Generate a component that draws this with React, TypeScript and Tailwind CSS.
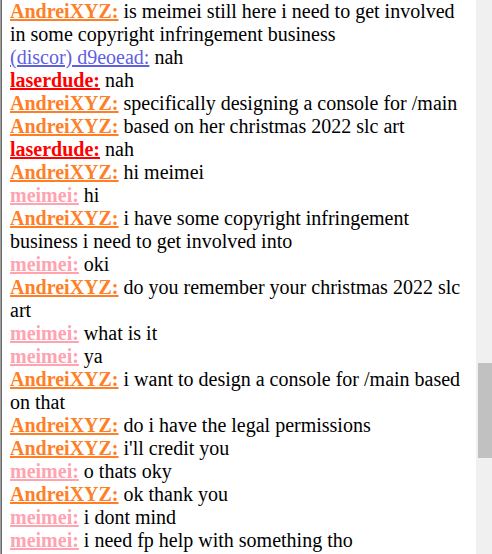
import React from "react";

type Msg = { user: string; text: string };

const colors: Record<string, string> = {
  "AndreiXYZ:": "font-bold text-[#ff7f27]",
  "laserdude:": "font-bold text-[#ff0000]",
  "meimei:": "font-bold text-[#ffa3b1]",
  "(discor) d9eoead:": "font-normal text-[#6060e0]",
};

const messages: Msg[] = [
  { user: "AndreiXYZ:", text: "is meimei still here i need to get involved in some copyright infringement business" },
  { user: "(discor) d9eoead:", text: "nah" },
  { user: "laserdude:", text: "nah" },
  { user: "AndreiXYZ:", text: "specifically designing a console for /main" },
  { user: "AndreiXYZ:", text: "based on her christmas 2022 slc art" },
  { user: "laserdude:", text: "nah" },
  { user: "AndreiXYZ:", text: "hi meimei" },
  { user: "meimei:", text: "hi" },
  { user: "AndreiXYZ:", text: "i have some copyright infringement business i need to get involved into" },
  { user: "meimei:", text: "oki" },
  { user: "AndreiXYZ:", text: "do you remember your christmas 2022 slc art" },
  { user: "meimei:", text: "what is it" },
  { user: "meimei:", text: "ya" },
  { user: "AndreiXYZ:", text: "i want to design a console for /main based on that" },
  { user: "AndreiXYZ:", text: "do i have the legal permissions" },
  { user: "AndreiXYZ:", text: "i'll credit you" },
  { user: "meimei:", text: "o thats oky" },
  { user: "AndreiXYZ:", text: "ok thank you" },
  { user: "meimei:", text: "i dont mind" },
  { user: "meimei:", text: "i need fp help with something tho" },
];

export default function App() {
  return (
    <div className="flex h-[554px] w-[492px] overflow-hidden bg-white font-['Liberation_Serif',serif] text-[20px] text-black">
      {/* chat log */}
      <div className="flex-1 overflow-hidden border-l border-l-[#a0a0a0] pl-[9px] pr-3 shadow-[inset_1px_0_0_#696969]">
        <div className="flex flex-col">
          {messages.map((m, i) => (
            <div key={i} className="leading-[23px]">
              <a href="#" className={"underline " + colors[m.user]}>
                {m.user}
              </a>{" "}
              {m.text}
            </div>
          ))}
        </div>
      </div>
      {/* scrollbar */}
      <div className="w-[16px] bg-[#f0f0f0] pl-[2px] pt-[363px]">
        <div className="h-[95px] w-[14px] bg-[#c1c1c1]" />
      </div>
    </div>
  );
}
